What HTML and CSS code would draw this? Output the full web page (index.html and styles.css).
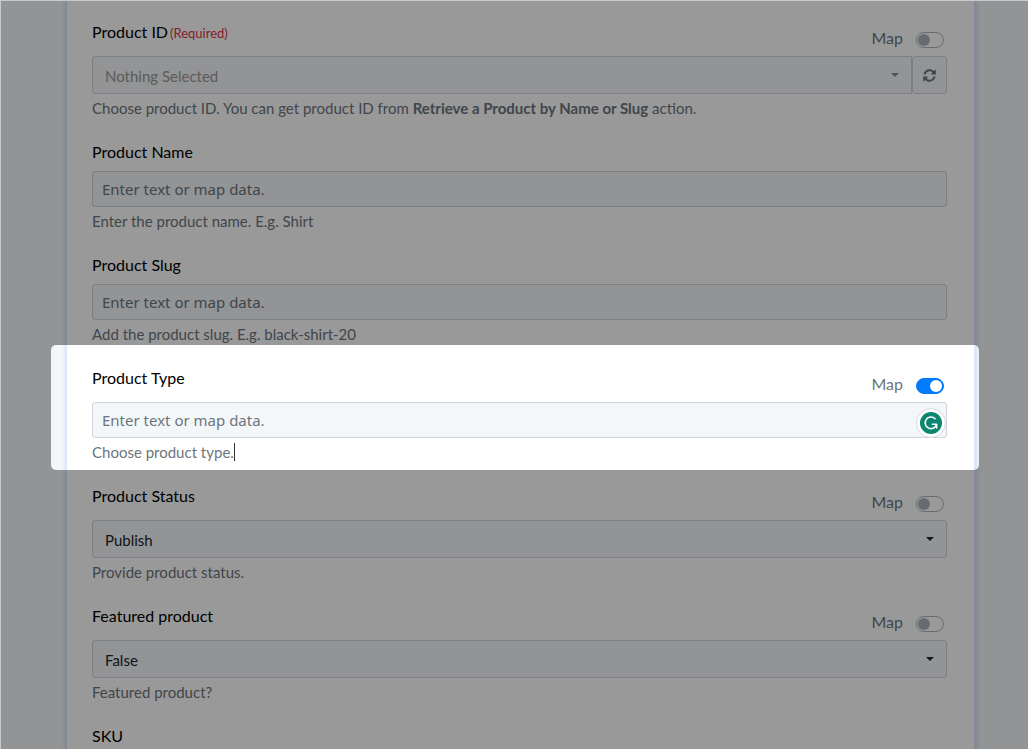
FILE: index.html
```html
<!DOCTYPE html>
<html lang="en">
<head>
  <meta charset="UTF-8" />
  <meta name="viewport" content="width=device-width, initial-scale=1" />
  <title>Update Product</title>
  <link rel="stylesheet" href="styles.css">
</head>
<body>

  <div class="page">
    <form class="card">

      <div class="field">
        <div class="field-head has-map">
          <label for="productId">Product ID<span class="required">(Required)</span></label>
          <div class="map">
            <label for="mapId">Map</label>
            <input type="checkbox" class="toggle" id="mapId">
          </div>
        </div>
        <div class="input-group">
          <div class="select-wrap is-disabled">
            <select id="productId" disabled>
              <option>Nothing Selected</option>
            </select>
          </div>
          <button type="button" class="refresh-button" aria-label="Refresh">
            <svg viewBox="0 0 512 512" width="13" height="13" fill="currentColor">
              <path d="M371 144A160 160 0 0 0 102 206c-2 6-7 10-13 10H32c-8 0-14-7-12-14C43 91 140 8 256 8c67 0 128 26 173 69l36-36c15-15 41-4 41 17v134c0 13-11 24-24 24H348c-21 0-32-26-17-41zM30 296h134c21 0 32 26 17 41l-41 41a160 160 0 0 0 270-72c2-6 7-10 13-10h57c8 0 14 7 12 14-23 111-120 194-236 194-67 0-128-26-173-69l-36 36c-15 15-41 4-41-17V320c0-13 11-24 24-24z"/>
            </svg>
          </button>
        </div>
        <p class="help">Choose product ID. You can get product ID from <strong>Retrieve a Product by Name or Slug</strong> action.</p>
      </div>

      <div class="field">
        <div class="field-head">
          <label for="productName">Product Name</label>
        </div>
        <input type="text" class="text-input" id="productName" placeholder="Enter text or map data.">
        <p class="help">Enter the product name. E.g. Shirt</p>
      </div>

      <div class="field">
        <div class="field-head">
          <label for="productSlug">Product Slug</label>
        </div>
        <input type="text" class="text-input" id="productSlug" placeholder="Enter text or map data.">
        <p class="help">Add the product slug. E.g. black-shirt-20</p>
      </div>

      <div class="field spotlight">
        <div class="field-head has-map">
          <label for="productType">Product Type</label>
          <div class="map">
            <label for="mapType">Map</label>
            <input type="checkbox" class="toggle" id="mapType" checked>
          </div>
        </div>
        <div class="input-wrap">
          <input type="text" class="text-input" id="productType" placeholder="Enter text or map data.">
          <button type="button" class="checker-button" aria-label="Check writing">
            <svg viewBox="0 0 22 22" width="22" height="22">
              <circle cx="11" cy="11" r="11" fill="#0b8770"/>
              <path d="M15 6.6A5.8 5.8 0 1 0 16.4 13" fill="none" stroke="#fff" stroke-width="1.6" stroke-linecap="round"/>
              <path d="M12.4 12.2H16.6V16" fill="none" stroke="#fff" stroke-width="1.6" stroke-linecap="round" stroke-linejoin="round"/>
            </svg>
          </button>
        </div>
        <p class="help"><span class="caret">Choose product type.</span></p>
      </div>

      <div class="field">
        <div class="field-head has-map">
          <label for="productStatus">Product Status</label>
          <div class="map">
            <label for="mapStatus">Map</label>
            <input type="checkbox" class="toggle" id="mapStatus">
          </div>
        </div>
        <div class="select-wrap">
          <select id="productStatus">
            <option>Publish</option>
          </select>
        </div>
        <p class="help">Provide product status.</p>
      </div>

      <div class="field">
        <div class="field-head has-map">
          <label for="featured">Featured product</label>
          <div class="map">
            <label for="mapFeatured">Map</label>
            <input type="checkbox" class="toggle" id="mapFeatured">
          </div>
        </div>
        <div class="select-wrap">
          <select id="featured">
            <option>False</option>
          </select>
        </div>
        <p class="help">Featured product?</p>
      </div>

      <div class="field">
        <div class="field-head">
          <label for="sku">SKU</label>
        </div>
        <input type="text" class="text-input" id="sku" placeholder="Enter text or map data.">
      </div>

    </form>
  </div>

</body>
</html>
```

FILE: styles.css
```css
* {
  box-sizing: border-box;
}

body {
  margin: 0;
  padding: 1px 0 0 1px;
  height: 100vh;
  overflow: hidden;
  background: #c6cacb;
  color: #000;
  font-family: Lato, "Liberation Sans", sans-serif;
  font-size: 16px;
  line-height: 24px;
}

.page {
  height: 100%;
  overflow: hidden;
  padding: 0 52px 0 65px;
  background: #f3f7fa;
}

.card {
  padding: 19px 27px 0 25px;
  background: #fff;
  border: solid #dbe6fd;
  border-width: 0 2px 0 1px;
  box-shadow: 0 0 4px rgba(80, 130, 220, 0.3);
}

.field {
  margin-bottom: 22px;
}

.field-head {
  display: flex;
  justify-content: space-between;
  height: 31px;
}

.field-head.has-map {
  height: 36px;
}

.required {
  margin-left: 2px;
  color: #dc3545;
  font-size: 13px;
}

.map {
  display: flex;
  align-items: center;
  gap: 13px;
  padding-right: 3px;
  color: #6c757d;
}

.toggle {
  appearance: none;
  width: 28px;
  height: 16px;
  margin: 4px 0 0;
  padding: 1px;
  border: 1px solid #adb5bd;
  border-radius: 8px;
}

.toggle::before {
  content: "";
  display: block;
  width: 12px;
  height: 12px;
  border-radius: 50%;
  background: #adb5bd;
}

.toggle:checked {
  background: #007bff;
  border-color: #007bff;
}

.toggle:checked::before {
  margin-left: auto;
  background: #fff;
}

.text-input,
select {
  display: block;
  width: 100%;
  background: #f3f7fa;
  border: 1px solid #ced4da;
  border-radius: 3px;
}

.text-input {
  height: 36px;
  padding: 0 9px;
  font-family: "Noto Sans", sans-serif;
  font-size: 15px;
}

.text-input::placeholder {
  color: #6c757d;
}

select {
  appearance: none;
  height: 38px;
  padding: 2px 12px 0;
  color: #212529;
  font-family: inherit;
  font-size: 15px;
  opacity: 1;
}

.select-wrap {
  position: relative;
  flex: 1;
}

.select-wrap::after {
  content: "";
  position: absolute;
  top: 17px;
  right: 13px;
  border: 4px solid transparent;
  border-top-color: #212529;
  border-bottom: 0;
}

.is-disabled select {
  color: #999;
  border-radius: 3px 0 0 3px;
}

.is-disabled::after {
  border-top-color: #888;
}

.input-group {
  display: flex;
}

.refresh-button {
  display: flex;
  align-items: center;
  justify-content: center;
  width: 35px;
  height: 38px;
  padding: 0;
  background: #f3f7fa;
  border: 1px solid #ced4da;
  border-radius: 3px;
  color: #6c757d;
}

.help {
  margin: 0;
  padding-top: 4px;
  color: #6c757d;
  font-size: 15px;
  line-height: 20px;
}

.caret {
  border-right: 1px solid #333;
}

.input-wrap {
  position: relative;
}

.checker-button {
  position: absolute;
  top: 6px;
  right: 1px;
  display: flex;
  align-items: center;
  justify-content: center;
  width: 30px;
  height: 30px;
  padding: 0;
  background: #fff;
  border: 1px solid #d5d9e4;
  border-radius: 50%;
}

/* Dims everything on the page except the active field */
.spotlight {
  position: relative;
  z-index: 1;
}

.spotlight::after {
  content: "";
  position: absolute;
  inset: -21px -32px -8px -41px;
  border-radius: 5px;
  box-shadow: 0 0 0 2000px rgba(0, 0, 0, 0.4);
  pointer-events: none;
}
```
